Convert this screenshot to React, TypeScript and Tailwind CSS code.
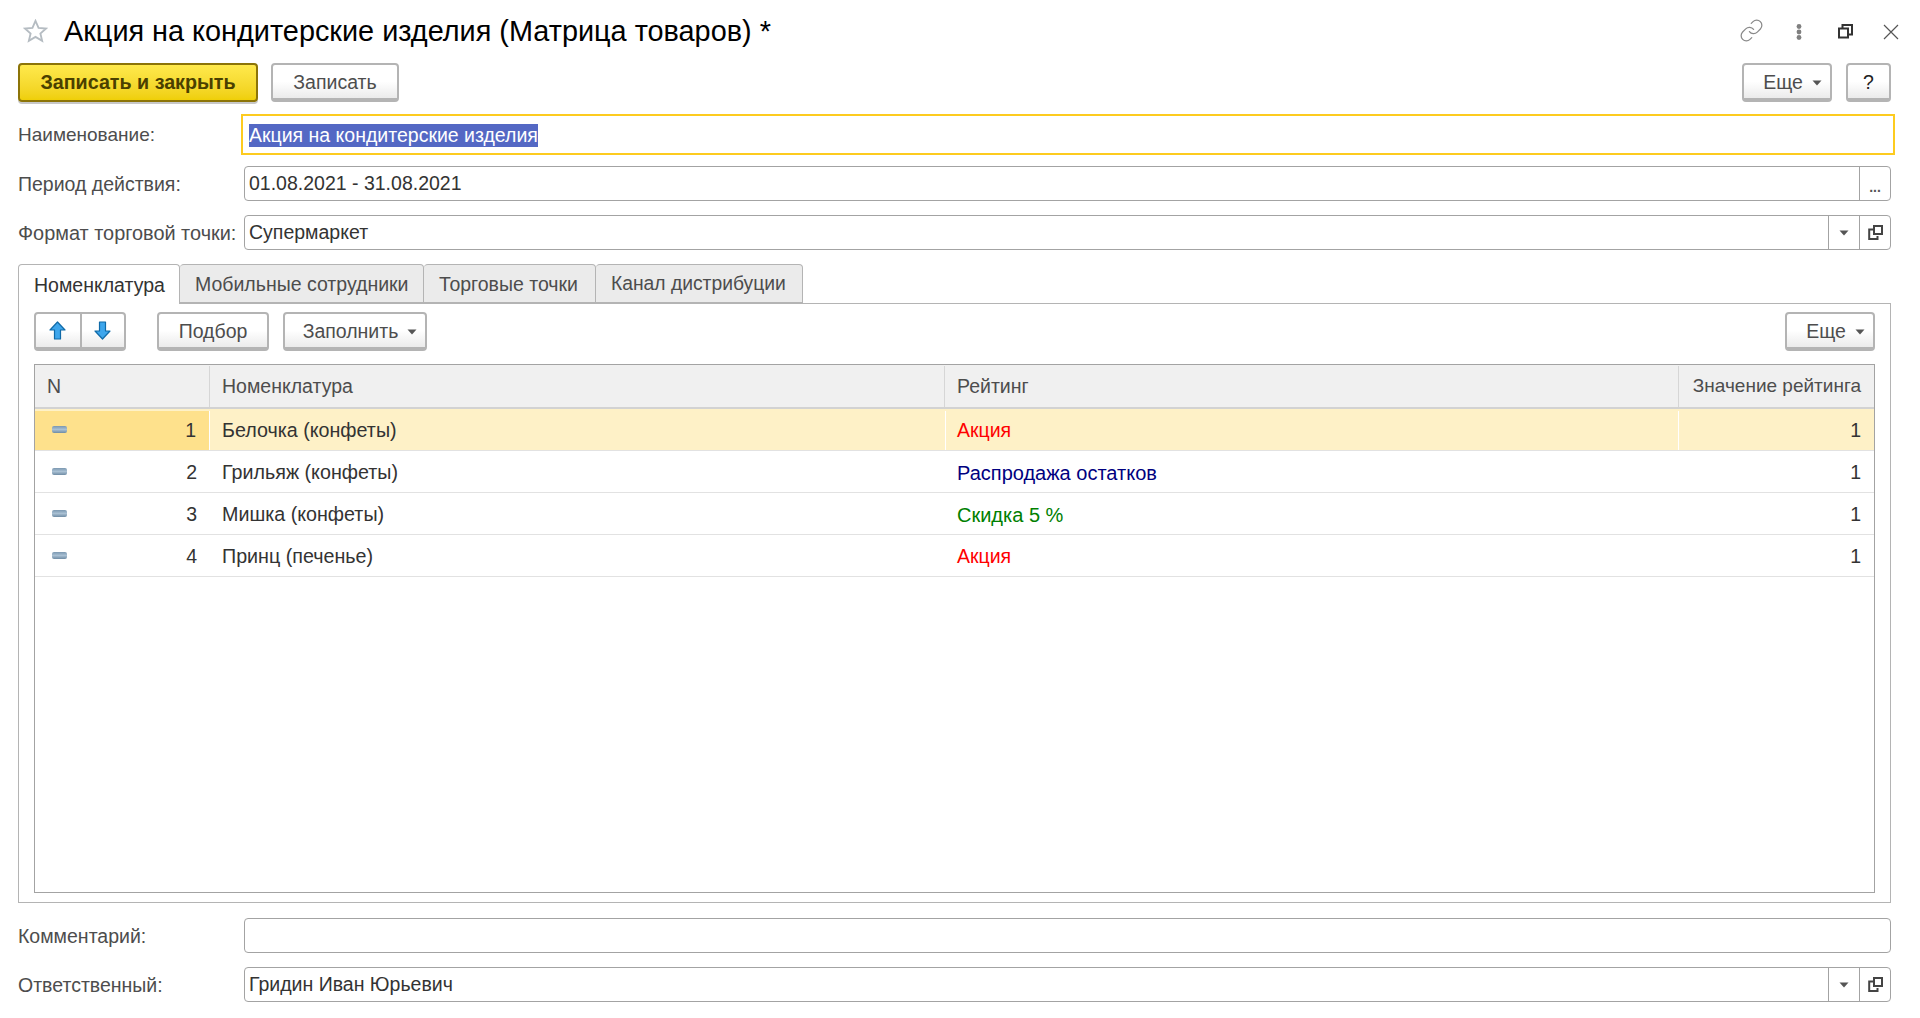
import { Link } from 'lucide-react';
import type { ReactNode } from 'react';

const Caret = ({ className = '' }: { className?: string }) => (
  <svg width="10" height="6" viewBox="0 0 10 6" className={className}>
    <path d="M0.5 0.5h9L5 5.5z" fill="#555" />
  </svg>
);

const OpenIcon = () => (
  <svg width="15" height="15" viewBox="0 0 15 15" fill="none" stroke="#444" strokeWidth="2">
    <rect x="6" y="1" width="8" height="8" />
    <path d="M6 4.5H1.2V14H9.5V11" />
  </svg>
);

const Arrow = ({ down = false }: { down?: boolean }) => (
  <svg width="17" height="19" viewBox="0 0 17 19" className={down ? 'rotate-180' : ''}>
    <path d="M8.5 1L16 9H11.5V18H5.5V9H1z" fill="#3ea6ec" stroke="#0f6aa8" strokeWidth="1.2" strokeLinejoin="round" />
  </svg>
);

const Btn = ({ children, className = '' }: { children: ReactNode; className?: string }) => (
  <button className={`flex h-[39px] items-center justify-center rounded-[4px] border-2 border-b-[4px] border-[#b4b4b4] bg-linear-to-b from-white from-50% to-[#ebebeb] pt-[2px] text-[19.5px] text-[#4d4d4d] ${className}`}>
    {children}
  </button>
);

const Field = ({ label, value, buttons, className = '', labelClass = '' }: { label: string; value?: string; buttons?: ReactNode; className?: string; labelClass?: string }) => (
  <div className={`flex items-center pr-[29px] pl-[18px] ${className}`}>
    <div className={`w-[226px] shrink-0 pt-[2px] text-[#4d4d4d] ${labelClass}`}>{label}</div>
    <div className="flex h-[35px] grow items-center rounded-[4px] border border-[#a3a3a3]">
      <div className="grow pt-[1px] pl-[4px] text-[#333]">{value}</div>
      {buttons}
    </div>
  </div>
);

const InputBtn = ({ children }: { children: ReactNode }) => (
  <div className="flex h-full w-[31px] items-center justify-center border-l border-[#a3a3a3]">{children}</div>
);

const rows = [
  { n: 1, name: 'Белочка (конфеты)', rating: 'Акция', color: 'text-[#ff0000]' },
  { n: 2, name: 'Грильяж (конфеты)', rating: 'Распродажа остатков', color: 'text-[#000080] text-[20px]' },
  { n: 3, name: 'Мишка (конфеты)', rating: 'Скидка 5 %', color: 'text-[#008000] text-[20px]' },
  { n: 4, name: 'Принц (печенье)', rating: 'Акция', color: 'text-[#ff0000]' },
];

export default function App() {
  return (
    <div className="h-[1018px] w-full overflow-hidden bg-white font-['Liberation_Sans',Arial,sans-serif] text-[19.5px] text-[#333]">
      {/* title */}
      <div className="flex h-[63px] items-center pr-[21px] pl-[23px]">
        <svg width="25" height="24" viewBox="0 0 27 26" fill="none" stroke="#b5bcc2" strokeWidth="2" className="-mt-[2px]">
          <path d="M13.5 2l3.3 7.6 8.2.7-6.2 5.4 1.9 8-7.2-4.3-7.2 4.3 1.9-8L2 10.3l8.2-.7z" />
        </svg>
        <h1 className="ml-[16px] grow text-[28.85px] leading-none text-black">Акция на кондитерские изделия (Матрица товаров) *</h1>
        <Link size={25} strokeWidth={1.2} color="#8a8a8a" className="-mt-[2px]" />
        <svg width="6" height="16" viewBox="0 0 6 16" fill="#808080" className="ml-[32px]">
          <circle cx="3" cy="2.5" r="2.4" />
          <circle cx="3" cy="8" r="2.4" />
          <circle cx="3" cy="13.5" r="2.4" />
        </svg>
        <svg width="15" height="15" viewBox="0 0 15 15" fill="none" stroke="#333" strokeWidth="2" className="ml-[36px]">
          <rect x="1" y="4.5" width="9" height="9" />
          <path d="M4.5 4.5V1H14V10.5H10" />
        </svg>
        <svg width="16" height="16" viewBox="0 0 16 16" stroke="#555" strokeWidth="1.2" className="ml-[30px]">
          <path d="M1 1l14 14M15 1L1 15" />
        </svg>
      </div>

      {/* command bar */}
      <div className="flex items-start pr-[29px] pl-[18px]">
        <button className="h-[39px] w-[240px] rounded-[4px] border-2 border-[#8c7408] bg-linear-to-b from-[#ffe94b] to-[#efcf06] text-[19.7px] font-bold text-[#4a4000] shadow-[0_2px_0_#c8c8c8]">
          Записать и закрыть
        </button>
        <Btn className="ml-[13px] w-[128px]">Записать</Btn>
        <Btn className="ml-auto w-[90px] gap-[9px] pl-[11px]">
          Еще <Caret />
        </Btn>
        <Btn className="ml-[14px] w-[45px] text-[#222]">?</Btn>
      </div>

      {/* fields */}
      <div className="mt-[12px] flex items-center pr-[25px] pl-[18px]">
        <div className="w-[223px] shrink-0 pt-[2px] text-[19px] text-[#4d4d4d]">Наименование:</div>
        <div className="flex h-[41px] grow items-center border-2 border-[#fdcb1f] pl-[6px]">
          <span className="mt-[1px] bg-[#5468c4] leading-[23px] text-white">Акция на кондитерские изделия</span>
        </div>
      </div>
      <Field
        label="Период действия:"
        value="01.08.2021 - 31.08.2021"
        className="mt-[11px]"
        buttons={
          <InputBtn>
            <span className="mt-[6px] text-[14px] leading-none font-bold text-[#555]">...</span>
          </InputBtn>
        }
      />
      <Field
        label="Формат торговой точки:"
        labelClass="text-[19.9px]"
        value="Супермаркет"
        className="mt-[14px]"
        buttons={
          <>
            <InputBtn>
              <Caret />
            </InputBtn>
            <InputBtn>
              <OpenIcon />
            </InputBtn>
          </>
        }
      />

      {/* tabs */}
      <div className="mt-[14px] mr-[29px] ml-[18px] flex h-[39px] items-stretch">
        <div className="z-10 -mb-px flex w-[162px] items-center rounded-t-[4px] border border-b-0 border-[#b4b4b4] bg-white pt-[2px] pl-[15px] text-[#333]">Номенклатура</div>
        {[
          ['Мобильные сотрудники', 'w-[244px]'],
          ['Торговые точки', 'w-[172px]'],
          ['Канал дистрибуции', 'w-[207px] text-[19.3px]'],
        ].map(([t, w]) => (
          <div key={t} className={`flex items-center rounded-t-[4px] border border-l-0 border-[#b4b4b4] bg-[#ebebeb] pt-[2px] pl-[15px] text-[#4d4d4d] ${w}`}>
            {t}
          </div>
        ))}
      </div>

      {/* panel */}
      <div className="mr-[29px] ml-[18px] flex h-[600px] flex-col border border-[#b4b4b4] px-[15px] pt-[8px] pb-[9px]">
        <div className="flex items-start">
          <div className="flex h-[39px] w-[92px] rounded-[4px] border-2 border-b-[4px] border-[#b4b4b4] bg-linear-to-b from-white from-50% to-[#ebebeb]">
            <div className="flex w-[46px] items-center justify-center border-r-2 border-[#b4b4b4] pr-[2px]">
              <Arrow />
            </div>
            <div className="flex grow items-center justify-center pr-[2px]">
              <Arrow down />
            </div>
          </div>
          <Btn className="ml-[31px] w-[112px]">Подбор</Btn>
          <Btn className="ml-[14px] w-[144px] gap-[9px] pl-[10px]">
            Заполнить <Caret />
          </Btn>
          <Btn className="ml-auto w-[90px] gap-[9px] pl-[11px]">
            Еще <Caret />
          </Btn>
        </div>

        <div className="mt-[13px] flex grow flex-col border border-[#a3a3a3]">
          <div className="grid h-[44px] grid-cols-[175px_735px_734px_1fr] border-b-2 border-[#d2d2d2] bg-[#f0f0f0] pt-[1px] text-[#4d4d4d]">
            <div className="flex items-center border-r border-[#d6d6d6] pl-[12px]">N</div>
            <div className="flex items-center border-r border-[#d6d6d6] pl-[12px]">Номенклатура</div>
            <div className="flex items-center border-r border-[#d6d6d6] pl-[12px]">Рейтинг</div>
            <div className="flex items-center justify-end pr-[13px] text-[19px]">Значение рейтинга</div>
          </div>
          {rows.map((r) => {
            const active = r.n === 1;
            return (
              <div key={r.n} className={`grid h-[42px] grid-cols-[175px_735px_734px_1fr] border-b border-[#e2e2e2] pt-[2px] ${active ? 'bg-[#fef1c7]' : ''}`}>
                <div className={`flex items-center justify-between pr-[13px] pl-[17px] ${active ? 'border-r border-white bg-[#fee18c]' : ''}`}>
                  <div className="-mt-[2px] h-[7px] w-[15px] rounded-[2px] bg-linear-to-b from-[#7b98b1] via-[#a9c0d3] to-[#6f8ca5]" />
                  <span>{r.n}</span>
                </div>
                <div className="flex items-center pl-[12px] text-[19.7px]">{r.name}</div>
                <div className={`flex items-center ${r.color} ${active ? 'border-x border-white pl-[11px]' : 'pl-[12px]'}`}>{r.rating}</div>
                <div className="flex items-center justify-end pr-[13px]">1</div>
              </div>
            );
          })}
        </div>
      </div>

      <Field label="Комментарий:" className="mt-[15px]" />
      <Field
        label="Ответственный:"
        value="Гридин Иван Юрьевич"
        className="mt-[14px]"
        buttons={
          <>
            <InputBtn>
              <Caret />
            </InputBtn>
            <InputBtn>
              <OpenIcon />
            </InputBtn>
          </>
        }
      />
    </div>
  );
}
